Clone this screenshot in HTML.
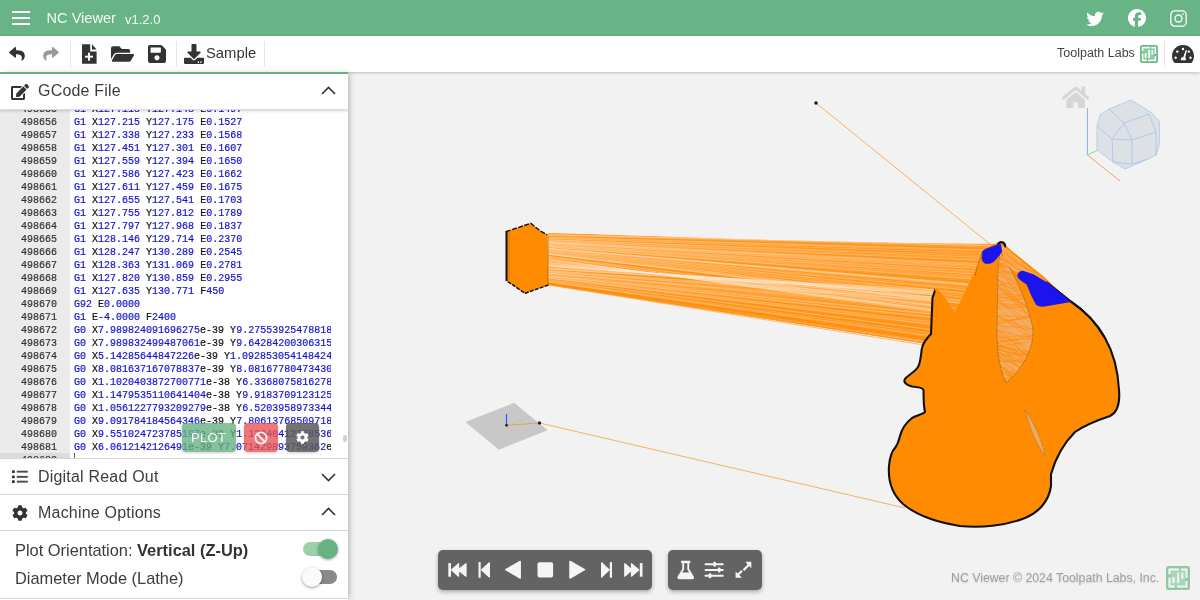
<!DOCTYPE html>
<html><head><meta charset="utf-8">
<style>
*{box-sizing:border-box;margin:0;padding:0}
html,body{width:1200px;height:600px;overflow:hidden;background:#f2f2f2;font-family:"Liberation Sans",sans-serif}
#top,#tool,#left,.txt{will-change:transform}
.abs{position:absolute}
#top{position:absolute;left:0;top:0;width:1200px;height:36px;background:#68b487}
#tool{position:absolute;left:0;top:36px;width:1200px;height:36px;background:#fff;box-shadow:0 1px 3px rgba(0,0,0,.22);z-index:3}
#left{position:absolute;left:0;top:72px;width:348px;height:528px;background:#fff;box-shadow:3px 0 6px -2px rgba(0,0,0,.3);z-index:4;overflow:hidden}
#view{position:absolute;left:0;top:0;width:1200px;height:600px;background:#f2f2f2;overflow:hidden}
.sep{position:absolute;top:41px;width:1px;height:26px;background:#e4e4e4}
.code{position:absolute;left:0;top:36px;width:331px;height:386px;overflow:hidden;font-family:"Liberation Mono",monospace;font-size:10px;line-height:13px;-webkit-text-stroke:0.2px;background:linear-gradient(90deg,#ebebeb 70px,#fff 70px)}
.ln{height:13px;position:relative}
.g{position:absolute;left:0;top:0;width:57px;text-align:right;color:#333}
.c{position:absolute;left:74px;top:0;white-space:pre}
.b{color:#1414d2}
.k{color:#111}
.hdr{position:absolute;left:0;width:348px;font-size:16px;color:#3c3c3c;letter-spacing:.2px}
.line{position:absolute;left:0;width:348px;height:1px;background:#d6d6d6}
</style></head><body>
<div id="view"><svg class="abs" style="left:0;top:0" width="1200" height="600" viewBox="0 0 1200 600">
<line x1="816" y1="103" x2="991" y2="245" stroke="#f5b060" stroke-width="1"/>
<circle cx="816" cy="103" r="1.7" fill="#111"/>
<line x1="506.5" y1="425.3" x2="539.5" y2="423" stroke="#e9a050" stroke-width="1.5"/>
<line x1="539.5" y1="423" x2="905" y2="508" stroke="#f3b06a" stroke-width="1"/>
<polygon points="514,402.8 547.6,430.2 498.9,449.7 465.3,422.1" fill="#c8c8c8"/>
<line x1="506.5" y1="425.3" x2="530.3" y2="416.7" stroke="#8fd08f" stroke-width="0.7" stroke-dasharray="1.5,1"/>
<line x1="506.5" y1="425.3" x2="522.7" y2="439.4" stroke="#e0a890" stroke-width="0.7" stroke-dasharray="1.5,1"/>
<line x1="506.5" y1="425.3" x2="506.5" y2="414" stroke="#1f5fff" stroke-width="1.2"/>
<line x1="506.5" y1="425.3" x2="539.5" y2="423" stroke="#e6a050" stroke-width="1.1"/>
<circle cx="506.5" cy="425.3" r="1.4" fill="#222"/>
<circle cx="539.5" cy="423" r="1.7" fill="#222"/>
<clipPath id="fc"><path d="M548,232.5 C620,235 700,238.3 800,240.8 C880,242.8 940,243.6 1001,244 L1010,250 L1010,400 L540,400 Z"/></clipPath>
<g clip-path="url(#fc)">
<polygon points="548.0,233.0 1000.0,243.5 997.3,244.6 994.6,245.7 991.9,246.9 989.6,248.6 987.2,250.3 984.9,252.0 983.4,254.4 982.4,257.2 981.5,259.9 980.5,262.6 979.3,265.3 978.0,267.9 976.7,270.5 975.4,273.1 974.1,275.8 972.8,278.4 971.6,281.0 970.3,283.6 969.1,286.3 967.8,288.9 966.6,291.5 965.3,294.2 964.1,296.8 962.8,299.4 961.5,302.0 960.2,304.6 958.9,307.2 957.6,309.9 956.3,312.5 955.0,315.1 953.5,313.8 952.0,311.4 950.4,308.9 948.9,306.4 947.3,303.9 945.8,301.5 944.3,299.0 942.6,296.6 940.6,294.5 938.6,292.3 936.6,290.2 935.1,290.2 934.2,292.9 933.3,295.7 932.5,298.5 932.4,301.4 932.2,304.3 932.1,307.2 932.0,310.2 931.9,313.1 931.8,316.0 931.6,318.9 931.5,321.8 931.4,324.7 931.3,327.6 931.1,330.5 931.0,333.4 929.6,335.9 927.9,338.3 926.2,340.6 548.0,283.5" fill="#ff9418"/>
<line x1="548" y1="281.0" x2="931.0" y2="333.9" stroke="#ff9010" stroke-opacity="0.8" stroke-width="0.7"/>
<line x1="548" y1="282.6" x2="927.8" y2="338.4" stroke="#ff9010" stroke-opacity="0.8" stroke-width="0.7"/>
<line x1="548" y1="281.7" x2="929.7" y2="335.8" stroke="#ff9010" stroke-opacity="0.8" stroke-width="0.7"/>
<line x1="548" y1="282.9" x2="927.2" y2="339.2" stroke="#ff9010" stroke-opacity="0.8" stroke-width="0.7"/>
<line x1="548" y1="283.1" x2="927.0" y2="339.5" stroke="#ff9010" stroke-opacity="0.8" stroke-width="0.7"/>
<line x1="548" y1="280.1" x2="931.1" y2="330.8" stroke="#ff9010" stroke-opacity="0.8" stroke-width="0.7"/>
<line x1="548" y1="279.9" x2="931.2" y2="329.8" stroke="#ff9010" stroke-opacity="0.8" stroke-width="0.7"/>
<line x1="548" y1="284.2" x2="924.7" y2="342.6" stroke="#ff9010" stroke-opacity="0.8" stroke-width="0.7"/>
<line x1="548" y1="281.1" x2="930.9" y2="334.2" stroke="#ff9010" stroke-opacity="0.8" stroke-width="0.7"/>
<line x1="548" y1="281.0" x2="931.0" y2="333.8" stroke="#ff9010" stroke-opacity="0.8" stroke-width="0.7"/>
<line x1="548" y1="285.0" x2="923.0" y2="344.9" stroke="#ff9010" stroke-opacity="0.8" stroke-width="0.7"/>
<line x1="548" y1="282.2" x2="928.6" y2="337.3" stroke="#ff9010" stroke-opacity="0.8" stroke-width="0.7"/>
<line x1="548" y1="284.1" x2="924.7" y2="342.6" stroke="#ff9010" stroke-opacity="0.8" stroke-width="0.7"/>
<line x1="548" y1="282.3" x2="928.6" y2="337.4" stroke="#ff9010" stroke-opacity="0.8" stroke-width="0.7"/>
<line x1="548" y1="283.1" x2="926.8" y2="339.7" stroke="#ff9010" stroke-opacity="0.8" stroke-width="0.7"/>
<line x1="548" y1="280.6" x2="931.1" y2="332.3" stroke="#ff9010" stroke-opacity="0.8" stroke-width="0.7"/>
<line x1="548" y1="283.1" x2="926.9" y2="339.7" stroke="#ff9010" stroke-opacity="0.8" stroke-width="0.7"/>
<line x1="548" y1="284.3" x2="924.4" y2="343.1" stroke="#ff9010" stroke-opacity="0.8" stroke-width="0.7"/>
<line x1="548" y1="282.5" x2="928.1" y2="338.0" stroke="#ff9010" stroke-opacity="0.8" stroke-width="0.7"/>
<line x1="548" y1="283.7" x2="925.7" y2="341.2" stroke="#ff9010" stroke-opacity="0.8" stroke-width="0.7"/>
<line x1="548" y1="283.3" x2="926.5" y2="340.2" stroke="#ff9010" stroke-opacity="0.8" stroke-width="0.7"/>
<line x1="548" y1="280.1" x2="931.1" y2="330.7" stroke="#ff9010" stroke-opacity="0.8" stroke-width="0.7"/>
<line x1="548" y1="283.7" x2="925.6" y2="341.5" stroke="#ff9010" stroke-opacity="0.8" stroke-width="0.7"/>
<line x1="548" y1="282.9" x2="927.3" y2="339.0" stroke="#ff9010" stroke-opacity="0.8" stroke-width="0.7"/>
<line x1="548" y1="281.4" x2="930.4" y2="334.8" stroke="#ff9010" stroke-opacity="0.8" stroke-width="0.7"/>
<line x1="548" y1="280.0" x2="931.2" y2="330.1" stroke="#ff9010" stroke-opacity="0.8" stroke-width="0.7"/>
<line x1="548" y1="284.3" x2="924.4" y2="343.0" stroke="#ff9010" stroke-opacity="0.8" stroke-width="0.7"/>
<line x1="548" y1="282.3" x2="928.6" y2="337.3" stroke="#ff9010" stroke-opacity="0.8" stroke-width="0.7"/>
<line x1="548" y1="283.5" x2="926.0" y2="340.9" stroke="#ff9010" stroke-opacity="0.8" stroke-width="0.7"/>
<line x1="548" y1="284.4" x2="924.3" y2="343.2" stroke="#ff9010" stroke-opacity="0.8" stroke-width="0.7"/>
<line x1="548" y1="268.8" x2="934.1" y2="293.2" stroke="#fff4e6" stroke-opacity="0.25" stroke-width="0.6"/>
<line x1="548" y1="273.1" x2="932.2" y2="306.1" stroke="#fff4e6" stroke-opacity="0.43" stroke-width="0.6"/>
<line x1="548" y1="276.9" x2="931.7" y2="318.2" stroke="#fff4e6" stroke-opacity="0.16" stroke-width="0.6"/>
<line x1="548" y1="244.2" x2="975.5" y2="273.0" stroke="#fff4e6" stroke-opacity="0.26" stroke-width="0.6"/>
<line x1="548" y1="264.5" x2="943.9" y2="298.5" stroke="#fff4e6" stroke-opacity="0.29" stroke-width="0.6"/>
<line x1="548" y1="252.6" x2="964.0" y2="297.1" stroke="#fff4e6" stroke-opacity="0.31" stroke-width="0.6"/>
<line x1="548" y1="262.4" x2="946.6" y2="302.8" stroke="#fff4e6" stroke-opacity="0.35" stroke-width="0.6"/>
<line x1="548" y1="279.4" x2="931.2" y2="329.5" stroke="#fff4e6" stroke-opacity="0.45" stroke-width="0.6"/>
<line x1="548" y1="266.7" x2="939.3" y2="293.1" stroke="#fff4e6" stroke-opacity="0.40" stroke-width="0.6"/>
<line x1="548" y1="281.2" x2="929.9" y2="335.4" stroke="#fff4e6" stroke-opacity="0.31" stroke-width="0.6"/>
<line x1="548" y1="268.8" x2="934.9" y2="290.8" stroke="#fff4e6" stroke-opacity="0.39" stroke-width="0.6"/>
<line x1="548" y1="261.9" x2="948.8" y2="306.3" stroke="#fff4e6" stroke-opacity="0.14" stroke-width="0.6"/>
<line x1="548" y1="275.7" x2="931.7" y2="317.2" stroke="#fff4e6" stroke-opacity="0.15" stroke-width="0.6"/>
<line x1="548" y1="273.1" x2="932.2" y2="305.9" stroke="#fff4e6" stroke-opacity="0.17" stroke-width="0.6"/>
<line x1="548" y1="248.0" x2="970.1" y2="284.2" stroke="#fff4e6" stroke-opacity="0.41" stroke-width="0.6"/>
<line x1="548" y1="235.7" x2="991.1" y2="247.5" stroke="#fff4e6" stroke-opacity="0.13" stroke-width="0.6"/>
<line x1="548" y1="269.0" x2="934.5" y2="291.9" stroke="#fff4e6" stroke-opacity="0.41" stroke-width="0.6"/>
<line x1="548" y1="282.0" x2="929.2" y2="336.5" stroke="#fff4e6" stroke-opacity="0.45" stroke-width="0.6"/>
<line x1="548" y1="248.8" x2="970.0" y2="284.4" stroke="#fff4e6" stroke-opacity="0.32" stroke-width="0.6"/>
<line x1="548" y1="235.1" x2="994.4" y2="245.8" stroke="#fff4e6" stroke-opacity="0.25" stroke-width="0.6"/>
<line x1="548" y1="263.7" x2="945.7" y2="301.3" stroke="#fff4e6" stroke-opacity="0.13" stroke-width="0.6"/>
<line x1="548" y1="276.4" x2="931.7" y2="317.1" stroke="#fff4e6" stroke-opacity="0.44" stroke-width="0.6"/>
<line x1="548" y1="277.8" x2="931.5" y2="322.3" stroke="#fff4e6" stroke-opacity="0.27" stroke-width="0.6"/>
<line x1="548" y1="259.2" x2="953.0" y2="312.9" stroke="#fff4e6" stroke-opacity="0.32" stroke-width="0.6"/>
<line x1="548" y1="261.1" x2="949.5" y2="307.3" stroke="#fff4e6" stroke-opacity="0.43" stroke-width="0.6"/>
<line x1="548" y1="258.6" x2="954.6" y2="315.5" stroke="#fff4e6" stroke-opacity="0.36" stroke-width="0.6"/>
<line x1="548" y1="245.3" x2="975.0" y2="274.0" stroke="#fff4e6" stroke-opacity="0.44" stroke-width="0.6"/>
<line x1="548" y1="259.3" x2="953.1" y2="313.1" stroke="#fff4e6" stroke-opacity="0.12" stroke-width="0.6"/>
<line x1="548" y1="254.0" x2="961.4" y2="302.3" stroke="#fff4e6" stroke-opacity="0.13" stroke-width="0.6"/>
<line x1="548" y1="263.9" x2="944.3" y2="299.1" stroke="#fff4e6" stroke-opacity="0.14" stroke-width="0.6"/>
<line x1="548" y1="264.5" x2="943.6" y2="297.9" stroke="#fff4e6" stroke-opacity="0.34" stroke-width="0.6"/>
<line x1="548" y1="250.9" x2="965.9" y2="293.1" stroke="#fff4e6" stroke-opacity="0.36" stroke-width="0.6"/>
<line x1="548" y1="234.6" x2="996.3" y2="245.0" stroke="#fff4e6" stroke-opacity="0.34" stroke-width="0.6"/>
<line x1="548" y1="281.1" x2="931.0" y2="333.2" stroke="#fff4e6" stroke-opacity="0.27" stroke-width="0.6"/>
<line x1="548" y1="262.8" x2="947.0" y2="303.4" stroke="#fff4e6" stroke-opacity="0.24" stroke-width="0.6"/>
<line x1="548" y1="249.0" x2="969.3" y2="285.8" stroke="#fff4e6" stroke-opacity="0.32" stroke-width="0.6"/>
<line x1="548" y1="248.4" x2="970.2" y2="283.9" stroke="#fff4e6" stroke-opacity="0.37" stroke-width="0.6"/>
<line x1="548" y1="234.8" x2="993.8" y2="246.0" stroke="#fff4e6" stroke-opacity="0.36" stroke-width="0.6"/>
<line x1="548" y1="248.8" x2="969.7" y2="284.9" stroke="#fff4e6" stroke-opacity="0.39" stroke-width="0.6"/>
<line x1="548" y1="245.3" x2="975.1" y2="273.8" stroke="#fff4e6" stroke-opacity="0.26" stroke-width="0.6"/>
<line x1="548" y1="268.0" x2="936.3" y2="289.9" stroke="#fff4e6" stroke-opacity="0.23" stroke-width="0.6"/>
<line x1="548" y1="250.0" x2="967.0" y2="290.6" stroke="#fff4e6" stroke-opacity="0.26" stroke-width="0.6"/>
<line x1="548" y1="275.8" x2="931.8" y2="314.5" stroke="#fff4e6" stroke-opacity="0.23" stroke-width="0.6"/>
<line x1="548" y1="265.6" x2="940.0" y2="293.8" stroke="#fff4e6" stroke-opacity="0.27" stroke-width="0.6"/>
<line x1="548" y1="244.6" x2="976.2" y2="271.5" stroke="#fff4e6" stroke-opacity="0.29" stroke-width="0.6"/>
<line x1="548" y1="242.9" x2="977.8" y2="268.5" stroke="#fff4e6" stroke-opacity="0.40" stroke-width="0.6"/>
<line x1="548" y1="242.6" x2="979.2" y2="265.7" stroke="#fff4e6" stroke-opacity="0.39" stroke-width="0.6"/>
<line x1="548" y1="265.2" x2="941.2" y2="295.1" stroke="#fff4e6" stroke-opacity="0.23" stroke-width="0.6"/>
<line x1="548" y1="239.9" x2="982.4" y2="257.1" stroke="#fff4e6" stroke-opacity="0.38" stroke-width="0.6"/>
<line x1="548" y1="246.9" x2="972.4" y2="279.3" stroke="#fff4e6" stroke-opacity="0.26" stroke-width="0.6"/>
<line x1="548" y1="254.3" x2="961.3" y2="302.5" stroke="#fff4e6" stroke-opacity="0.42" stroke-width="0.6"/>
<line x1="548" y1="241.2" x2="981.3" y2="260.4" stroke="#fff4e6" stroke-opacity="0.43" stroke-width="0.6"/>
<line x1="548" y1="277.0" x2="931.5" y2="321.6" stroke="#fff4e6" stroke-opacity="0.26" stroke-width="0.6"/>
<line x1="548" y1="280.5" x2="931.0" y2="333.4" stroke="#fff4e6" stroke-opacity="0.19" stroke-width="0.6"/>
<line x1="548" y1="270.3" x2="932.5" y2="298.1" stroke="#fff4e6" stroke-opacity="0.34" stroke-width="0.6"/>
<line x1="548" y1="259.2" x2="953.7" y2="314.2" stroke="#fff4e6" stroke-opacity="0.23" stroke-width="0.6"/>
<line x1="548" y1="244.8" x2="976.1" y2="271.7" stroke="#fff4e6" stroke-opacity="0.31" stroke-width="0.6"/>
<line x1="548" y1="247.7" x2="970.5" y2="283.3" stroke="#fff4e6" stroke-opacity="0.13" stroke-width="0.6"/>
<line x1="548" y1="278.2" x2="931.4" y2="324.6" stroke="#fff4e6" stroke-opacity="0.42" stroke-width="0.6"/>
<line x1="548" y1="277.8" x2="931.4" y2="324.1" stroke="#fff4e6" stroke-opacity="0.31" stroke-width="0.6"/>
<line x1="548" y1="234.2" x2="995.4" y2="245.4" stroke="#fff4e6" stroke-opacity="0.18" stroke-width="0.6"/>
<line x1="548" y1="248.3" x2="969.8" y2="284.8" stroke="#fff4e6" stroke-opacity="0.29" stroke-width="0.6"/>
<line x1="548" y1="254.0" x2="960.9" y2="303.3" stroke="#fff4e6" stroke-opacity="0.32" stroke-width="0.6"/>
<line x1="548" y1="250.4" x2="967.4" y2="289.9" stroke="#fff4e6" stroke-opacity="0.40" stroke-width="0.6"/>
<line x1="548" y1="257.1" x2="956.3" y2="312.5" stroke="#fff4e6" stroke-opacity="0.24" stroke-width="0.6"/>
<line x1="548" y1="243.3" x2="977.7" y2="268.6" stroke="#fff4e6" stroke-opacity="0.39" stroke-width="0.6"/>
<line x1="548" y1="242.0" x2="979.3" y2="265.4" stroke="#fff4e6" stroke-opacity="0.42" stroke-width="0.6"/>
<line x1="548" y1="273.3" x2="932.1" y2="308.4" stroke="#fff4e6" stroke-opacity="0.12" stroke-width="0.6"/>
<line x1="548" y1="264.6" x2="942.6" y2="296.6" stroke="#fff4e6" stroke-opacity="0.14" stroke-width="0.6"/>
<line x1="548" y1="246.9" x2="972.5" y2="279.1" stroke="#fff4e6" stroke-opacity="0.29" stroke-width="0.6"/>
<line x1="548" y1="254.4" x2="960.9" y2="303.2" stroke="#fff4e6" stroke-opacity="0.38" stroke-width="0.6"/>
<line x1="548" y1="233.6" x2="999.5" y2="243.7" stroke="#fff4e6" stroke-opacity="0.16" stroke-width="0.6"/>
<line x1="548" y1="239.7" x2="983.0" y2="255.5" stroke="#fff4e6" stroke-opacity="0.44" stroke-width="0.6"/>
<line x1="548" y1="275.7" x2="931.8" y2="314.0" stroke="#fff4e6" stroke-opacity="0.29" stroke-width="0.6"/>
<line x1="548" y1="249.1" x2="969.1" y2="286.1" stroke="#fff4e6" stroke-opacity="0.24" stroke-width="0.6"/>
<line x1="548" y1="265.5" x2="941.1" y2="295.0" stroke="#fff4e6" stroke-opacity="0.24" stroke-width="0.6"/>
<line x1="548" y1="243.0" x2="978.5" y2="267.0" stroke="#fff4e6" stroke-opacity="0.16" stroke-width="0.6"/>
<line x1="548" y1="261.0" x2="949.6" y2="307.6" stroke="#fff4e6" stroke-opacity="0.25" stroke-width="0.6"/>
<line x1="548" y1="237.5" x2="987.4" y2="250.2" stroke="#fff4e6" stroke-opacity="0.24" stroke-width="0.6"/>
<line x1="548" y1="263.4" x2="945.0" y2="300.3" stroke="#fff4e6" stroke-opacity="0.25" stroke-width="0.6"/>
<line x1="548" y1="273.1" x2="932.1" y2="306.8" stroke="#fff4e6" stroke-opacity="0.26" stroke-width="0.6"/>
<line x1="548" y1="251.9" x2="964.7" y2="295.5" stroke="#fff4e6" stroke-opacity="0.35" stroke-width="0.6"/>
<line x1="548" y1="254.3" x2="960.8" y2="303.5" stroke="#fff4e6" stroke-opacity="0.27" stroke-width="0.6"/>
<line x1="548" y1="245.6" x2="974.0" y2="275.9" stroke="#fff4e6" stroke-opacity="0.35" stroke-width="0.6"/>
<line x1="548" y1="237.1" x2="987.9" y2="249.8" stroke="#fff4e6" stroke-opacity="0.26" stroke-width="0.6"/>
<line x1="548" y1="277.0" x2="931.5" y2="321.4" stroke="#fff4e6" stroke-opacity="0.24" stroke-width="0.6"/>
<line x1="548" y1="277.9" x2="931.4" y2="324.0" stroke="#fff4e6" stroke-opacity="0.21" stroke-width="0.6"/>
<line x1="548" y1="256.4" x2="958.4" y2="308.4" stroke="#fff4e6" stroke-opacity="0.39" stroke-width="0.6"/>
<line x1="548" y1="266.2" x2="938.6" y2="292.3" stroke="#fff4e6" stroke-opacity="0.38" stroke-width="0.6"/>
<line x1="548" y1="266.5" x2="938.4" y2="292.1" stroke="#fff4e6" stroke-opacity="0.31" stroke-width="0.6"/>
<line x1="548" y1="238.6" x2="983.6" y2="253.8" stroke="#fff4e6" stroke-opacity="0.12" stroke-width="0.6"/>
<line x1="548" y1="240.6" x2="981.1" y2="261.0" stroke="#fff4e6" stroke-opacity="0.13" stroke-width="0.6"/>
<line x1="548" y1="238.1" x2="986.0" y2="251.2" stroke="#fff4e6" stroke-opacity="0.41" stroke-width="0.6"/>
<line x1="548" y1="242.4" x2="979.9" y2="264.2" stroke="#fff4e6" stroke-opacity="0.40" stroke-width="0.6"/>
<line x1="548" y1="239.5" x2="982.3" y2="257.6" stroke="#fff4e6" stroke-opacity="0.34" stroke-width="0.6"/>
<line x1="548" y1="274.8" x2="931.8" y2="314.0" stroke="#fff4e6" stroke-opacity="0.31" stroke-width="0.6"/>
<line x1="548" y1="273.0" x2="932.2" y2="304.3" stroke="#fff4e6" stroke-opacity="0.37" stroke-width="0.6"/>
<line x1="548" y1="258.8" x2="953.6" y2="314.0" stroke="#fff4e6" stroke-opacity="0.16" stroke-width="0.6"/>
<line x1="548" y1="270.5" x2="932.5" y2="299.0" stroke="#fff4e6" stroke-opacity="0.14" stroke-width="0.6"/>
<line x1="548" y1="249.5" x2="968.1" y2="288.2" stroke="#fff4e6" stroke-opacity="0.39" stroke-width="0.6"/>
<line x1="548" y1="245.5" x2="974.8" y2="274.3" stroke="#fff4e6" stroke-opacity="0.20" stroke-width="0.6"/>
<line x1="548" y1="263.9" x2="944.1" y2="298.7" stroke="#fff4e6" stroke-opacity="0.25" stroke-width="0.6"/>
<line x1="548" y1="251.7" x2="965.2" y2="294.4" stroke="#fff4e6" stroke-opacity="0.24" stroke-width="0.6"/>
<line x1="548" y1="254.2" x2="961.9" y2="301.2" stroke="#fff4e6" stroke-opacity="0.29" stroke-width="0.6"/>
<line x1="548" y1="281.6" x2="930.1" y2="335.2" stroke="#fff4e6" stroke-opacity="0.37" stroke-width="0.6"/>
<line x1="548" y1="241.5" x2="980.2" y2="263.5" stroke="#fff4e6" stroke-opacity="0.37" stroke-width="0.6"/>
<line x1="548" y1="266.8" x2="938.2" y2="291.8" stroke="#fff4e6" stroke-opacity="0.28" stroke-width="0.6"/>
<line x1="548" y1="265.3" x2="940.8" y2="294.7" stroke="#fff4e6" stroke-opacity="0.17" stroke-width="0.6"/>
<line x1="548" y1="238.3" x2="983.8" y2="253.2" stroke="#fff4e6" stroke-opacity="0.42" stroke-width="0.6"/>
<line x1="548" y1="259.1" x2="953.6" y2="314.0" stroke="#fff4e6" stroke-opacity="0.36" stroke-width="0.6"/>
<line x1="548" y1="242.7" x2="979.0" y2="266.0" stroke="#fff4e6" stroke-opacity="0.19" stroke-width="0.6"/>
<line x1="548" y1="262.4" x2="947.6" y2="304.4" stroke="#fff4e6" stroke-opacity="0.20" stroke-width="0.6"/>
<line x1="548" y1="267.7" x2="935.3" y2="289.6" stroke="#fff4e6" stroke-opacity="0.22" stroke-width="0.6"/>
<line x1="548" y1="268.4" x2="935.1" y2="290.1" stroke="#fff4e6" stroke-opacity="0.40" stroke-width="0.6"/>
<line x1="548" y1="262.4" x2="947.8" y2="304.7" stroke="#fff4e6" stroke-opacity="0.19" stroke-width="0.6"/>
<line x1="548" y1="234.7" x2="994.7" y2="245.7" stroke="#fff4e6" stroke-opacity="0.25" stroke-width="0.6"/>
<line x1="548" y1="242.0" x2="979.9" y2="264.2" stroke="#fff4e6" stroke-opacity="0.23" stroke-width="0.6"/>
<line x1="548" y1="271.8" x2="932.4" y2="300.5" stroke="#fff4e6" stroke-opacity="0.45" stroke-width="0.6"/>
<line x1="548" y1="257.2" x2="956.4" y2="312.3" stroke="#fff4e6" stroke-opacity="0.27" stroke-width="0.6"/>
<line x1="548" y1="274.7" x2="931.9" y2="313.2" stroke="#fff4e6" stroke-opacity="0.30" stroke-width="0.6"/>
<line x1="548" y1="257.3" x2="956.1" y2="312.9" stroke="#fff4e6" stroke-opacity="0.40" stroke-width="0.6"/>
<line x1="548" y1="253.3" x2="962.2" y2="300.5" stroke="#fff4e6" stroke-opacity="0.44" stroke-width="0.6"/>
<line x1="548" y1="256.6" x2="957.9" y2="309.2" stroke="#fff4e6" stroke-opacity="0.20" stroke-width="0.6"/>
<line x1="548" y1="269.0" x2="934.2" y2="293.0" stroke="#fff4e6" stroke-opacity="0.44" stroke-width="0.6"/>
<line x1="548" y1="275.7" x2="931.8" y2="314.5" stroke="#fff4e6" stroke-opacity="0.18" stroke-width="0.6"/>
<line x1="548" y1="246.3" x2="973.6" y2="276.9" stroke="#fff4e6" stroke-opacity="0.35" stroke-width="0.6"/>
<line x1="548" y1="275.9" x2="931.7" y2="317.6" stroke="#fff4e6" stroke-opacity="0.20" stroke-width="0.6"/>
<line x1="548" y1="276.3" x2="931.7" y2="316.6" stroke="#fff4e6" stroke-opacity="0.26" stroke-width="0.6"/>
<line x1="548" y1="269.5" x2="934.2" y2="292.8" stroke="#fff4e6" stroke-opacity="0.15" stroke-width="0.6"/>
<line x1="548" y1="274.7" x2="931.9" y2="311.2" stroke="#fff4e6" stroke-opacity="0.24" stroke-width="0.6"/>
<line x1="548" y1="262.2" x2="947.4" y2="304.1" stroke="#fff4e6" stroke-opacity="0.12" stroke-width="0.6"/>
<line x1="548" y1="250.1" x2="967.6" y2="289.5" stroke="#fff4e6" stroke-opacity="0.28" stroke-width="0.6"/>
<line x1="548" y1="243.9" x2="976.6" y2="270.7" stroke="#fff4e6" stroke-opacity="0.44" stroke-width="0.6"/>
<line x1="548" y1="252.8" x2="963.3" y2="298.5" stroke="#fff4e6" stroke-opacity="0.16" stroke-width="0.6"/>
<line x1="548" y1="247.1" x2="971.6" y2="280.9" stroke="#fff4e6" stroke-opacity="0.16" stroke-width="0.6"/>
<line x1="548" y1="277.3" x2="931.5" y2="322.6" stroke="#fff4e6" stroke-opacity="0.15" stroke-width="0.6"/>
<line x1="548" y1="280.0" x2="931.2" y2="329.9" stroke="#fff4e6" stroke-opacity="0.37" stroke-width="0.6"/>
<line x1="548" y1="270.9" x2="932.5" y2="298.1" stroke="#fff4e6" stroke-opacity="0.34" stroke-width="0.6"/>
<line x1="548" y1="265.8" x2="939.8" y2="293.5" stroke="#fff4e6" stroke-opacity="0.21" stroke-width="0.6"/>
<line x1="548" y1="270.8" x2="932.4" y2="300.0" stroke="#fff4e6" stroke-opacity="0.34" stroke-width="0.6"/>
<line x1="548" y1="260.0" x2="952.5" y2="312.2" stroke="#fff4e6" stroke-opacity="0.28" stroke-width="0.6"/>
<line x1="548" y1="250.9" x2="965.9" y2="293.1" stroke="#fff4e6" stroke-opacity="0.34" stroke-width="0.6"/>
<line x1="548" y1="261.5" x2="949.7" y2="307.6" stroke="#fff4e6" stroke-opacity="0.33" stroke-width="0.6"/>
<line x1="548" y1="264.7" x2="943.8" y2="298.3" stroke="#fff4e6" stroke-opacity="0.41" stroke-width="0.6"/>
<line x1="548" y1="265.9" x2="941.3" y2="295.2" stroke="#fff4e6" stroke-opacity="0.43" stroke-width="0.6"/>
<line x1="548" y1="240.5" x2="981.7" y2="259.1" stroke="#fff4e6" stroke-opacity="0.36" stroke-width="0.6"/>
<line x1="548" y1="263.0" x2="946.1" y2="302.0" stroke="#fff4e6" stroke-opacity="0.33" stroke-width="0.6"/>
<line x1="548" y1="256.1" x2="958.5" y2="308.0" stroke="#fff4e6" stroke-opacity="0.18" stroke-width="0.6"/>
<line x1="548" y1="236.9" x2="987.4" y2="250.2" stroke="#fff4e6" stroke-opacity="0.37" stroke-width="0.6"/>
<line x1="548" y1="260.4" x2="950.7" y2="309.3" stroke="#fff4e6" stroke-opacity="0.24" stroke-width="0.6"/>
<line x1="548" y1="246.7" x2="972.7" y2="278.6" stroke="#fff4e6" stroke-opacity="0.41" stroke-width="0.6"/>
<line x1="548" y1="235.6" x2="991.7" y2="247.0" stroke="#fff4e6" stroke-opacity="0.20" stroke-width="0.6"/>
<line x1="548" y1="271.5" x2="932.4" y2="300.3" stroke="#fff4e6" stroke-opacity="0.23" stroke-width="0.6"/>
<line x1="548" y1="253.4" x2="962.3" y2="300.4" stroke="#fff4e6" stroke-opacity="0.37" stroke-width="0.6"/>
<line x1="548" y1="251.0" x2="965.6" y2="293.6" stroke="#fff4e6" stroke-opacity="0.16" stroke-width="0.6"/>
<line x1="548" y1="246.9" x2="972.8" y2="278.4" stroke="#fff4e6" stroke-opacity="0.16" stroke-width="0.6"/>
<line x1="548" y1="272.0" x2="932.3" y2="303.4" stroke="#fff4e6" stroke-opacity="0.18" stroke-width="0.6"/>
<line x1="548" y1="242.9" x2="978.5" y2="267.0" stroke="#fff4e6" stroke-opacity="0.37" stroke-width="0.6"/>
<line x1="548" y1="273.8" x2="932.0" y2="309.8" stroke="#fff4e6" stroke-opacity="0.32" stroke-width="0.6"/>
<line x1="548" y1="240.8" x2="981.4" y2="260.2" stroke="#fff4e6" stroke-opacity="0.18" stroke-width="0.6"/>
<line x1="548" y1="259.6" x2="952.4" y2="312.1" stroke="#fff4e6" stroke-opacity="0.19" stroke-width="0.6"/>
<line x1="548" y1="245.9" x2="973.3" y2="277.5" stroke="#fff4e6" stroke-opacity="0.13" stroke-width="0.6"/>
<line x1="548" y1="273.2" x2="932.1" y2="308.1" stroke="#fff4e6" stroke-opacity="0.43" stroke-width="0.6"/>
<line x1="548" y1="252.4" x2="963.8" y2="297.3" stroke="#fff4e6" stroke-opacity="0.31" stroke-width="0.6"/>
<line x1="548" y1="264.8" x2="941.7" y2="295.7" stroke="#fff4e6" stroke-opacity="0.35" stroke-width="0.6"/>
<line x1="548" y1="248.3" x2="969.5" y2="285.4" stroke="#fff4e6" stroke-opacity="0.28" stroke-width="0.6"/>
<line x1="548" y1="263.2" x2="945.4" y2="300.9" stroke="#fff4e6" stroke-opacity="0.12" stroke-width="0.6"/>
<line x1="548" y1="271.6" x2="932.3" y2="301.7" stroke="#fff4e6" stroke-opacity="0.28" stroke-width="0.6"/>
<line x1="548" y1="259.4" x2="953.0" y2="313.0" stroke="#fff4e6" stroke-opacity="0.18" stroke-width="0.6"/>
<line x1="548" y1="259.7" x2="953.3" y2="313.4" stroke="#fff4e6" stroke-opacity="0.29" stroke-width="0.6"/>
</g>
<path d="M1000,243.3 C1004,244 1008,247 1012,251 L1043,276 L1071,301.7 C1085,311 1097,324 1105,338 C1113,352 1118,370 1119,390 C1120,402 1118,412 1110,416 C1098,420 1085,425 1075,432 C1062,445 1055,460 1051,474 L1051,486 C1049,500 1040,512 1025,518 C1005,526 980,528 960,526 C935,522 915,514 903,504 C892,494 888,480 889,466 C890,455 893,450 895,448 C898,444 899,440 900,436 C902,428 907,422 912,418 C918,415 923,414 925,412 C923.5,406 923.5,398 923.5,390 C923,388 918,387 912,386.5 C906,385 903,382 905,379 C908,375 915,372 918,367 C921,362 921,352 922,348 C923,343 927,338 931,334 L932.5,298 L935.5,289 L943,297 L954.7,315.7 L964,297 L973,278 L980,264 L984,252.7 L992,246.8 Z" fill="#ff8c00"/>
<path d="M1046,282 L1071,301.7 C1085,311 1097,324 1105,338 C1113,352 1118,370 1119,390 C1120,402 1118,412 1110,416 C1098,420 1085,425 1075,432 C1062,445 1055,460 1051,474 L1051,486 C1049,500 1040,512 1025,518 C1005,526 980,528 960,526 C935,522 915,514 903,504 C892,494 888,480 889,466 C890,455 893,450 895,448 C898,444 899,440 900,436 C902,428 907,422 912,418 C918,415 923,414 925,412 C923.5,406 923.5,398 923.5,390 C923,388 918,387 912,386.5 C906,385 903,382 905,379 C908,375 915,372 918,367 C921,362 921,352 922,348 C923,343 927,338 931,334 L932.5,298 L935.5,289 " fill="none" stroke="#111" stroke-width="2.1" stroke-linejoin="round"/>
<path d="M935.5,289 L943,297 L954.7,315.7 L964,297 L973,278 L980,264 L984,252.7 L992,246.8 L1000,243.3" fill="none" stroke="#ff8c00" stroke-width="2.8"/>
<clipPath id="lc"><path d="M1000,252 C1012,270 1028,300 1033,330 C1034,350 1020,372 1006,383 C1000,370 997,355 997,330 L998,268 Z"/></clipPath>
<path d="M1000,252 C1012,270 1028,300 1033,330 C1034,350 1020,372 1006,383 C1000,370 997,355 997,330 L998,268 Z" fill="#f5ac64"/>
<g clip-path="url(#lc)">
<line x1="995" y1="333.4" x2="1036" y2="350.0" stroke="#ff8c00" stroke-width="0.7" stroke-opacity="0.75"/>
<line x1="995" y1="320.6" x2="1036" y2="368.1" stroke="#ff8c00" stroke-width="0.7" stroke-opacity="0.75"/>
<line x1="995" y1="372.7" x2="1036" y2="370.9" stroke="#ff8c00" stroke-width="0.7" stroke-opacity="0.75"/>
<line x1="995" y1="356.8" x2="1036" y2="384.2" stroke="#ff8c00" stroke-width="0.7" stroke-opacity="0.75"/>
<line x1="995" y1="238.1" x2="1036" y2="249.7" stroke="#ff8c00" stroke-width="0.7" stroke-opacity="0.75"/>
<line x1="995" y1="267.3" x2="1036" y2="262.0" stroke="#ff8c00" stroke-width="0.7" stroke-opacity="0.75"/>
<line x1="995" y1="316.2" x2="1036" y2="362.0" stroke="#ff8c00" stroke-width="0.7" stroke-opacity="0.75"/>
<line x1="995" y1="281.7" x2="1036" y2="323.9" stroke="#ff8c00" stroke-width="0.7" stroke-opacity="0.75"/>
<line x1="995" y1="341.1" x2="1036" y2="339.2" stroke="#ff8c00" stroke-width="0.7" stroke-opacity="0.75"/>
<line x1="995" y1="367.3" x2="1036" y2="393.4" stroke="#ff8c00" stroke-width="0.7" stroke-opacity="0.75"/>
<line x1="995" y1="378.3" x2="1036" y2="411.3" stroke="#ff8c00" stroke-width="0.7" stroke-opacity="0.75"/>
<line x1="995" y1="348.4" x2="1036" y2="359.0" stroke="#ff8c00" stroke-width="0.7" stroke-opacity="0.75"/>
<line x1="995" y1="359.1" x2="1036" y2="405.0" stroke="#ff8c00" stroke-width="0.7" stroke-opacity="0.75"/>
<line x1="995" y1="367.8" x2="1036" y2="384.1" stroke="#ff8c00" stroke-width="0.7" stroke-opacity="0.75"/>
<line x1="995" y1="351.1" x2="1036" y2="370.2" stroke="#ff8c00" stroke-width="0.7" stroke-opacity="0.75"/>
<line x1="995" y1="247.5" x2="1036" y2="240.0" stroke="#ff8c00" stroke-width="0.7" stroke-opacity="0.75"/>
<line x1="995" y1="242.5" x2="1036" y2="244.5" stroke="#ff8c00" stroke-width="0.7" stroke-opacity="0.75"/>
<line x1="995" y1="255.7" x2="1036" y2="275.6" stroke="#ff8c00" stroke-width="0.7" stroke-opacity="0.75"/>
<line x1="995" y1="341.9" x2="1036" y2="364.1" stroke="#ff8c00" stroke-width="0.7" stroke-opacity="0.75"/>
<line x1="995" y1="297.5" x2="1036" y2="326.5" stroke="#ff8c00" stroke-width="0.7" stroke-opacity="0.75"/>
<line x1="995" y1="278.7" x2="1036" y2="296.6" stroke="#ff8c00" stroke-width="0.7" stroke-opacity="0.75"/>
<line x1="995" y1="351.1" x2="1036" y2="365.2" stroke="#ff8c00" stroke-width="0.7" stroke-opacity="0.75"/>
<line x1="995" y1="258.9" x2="1036" y2="302.9" stroke="#ff8c00" stroke-width="0.7" stroke-opacity="0.75"/>
<line x1="995" y1="345.2" x2="1036" y2="357.2" stroke="#ff8c00" stroke-width="0.7" stroke-opacity="0.75"/>
<line x1="995" y1="289.4" x2="1036" y2="311.1" stroke="#ff8c00" stroke-width="0.7" stroke-opacity="0.75"/>
<line x1="995" y1="325.4" x2="1036" y2="328.9" stroke="#ff8c00" stroke-width="0.7" stroke-opacity="0.75"/>
<line x1="995" y1="230.4" x2="1036" y2="233.0" stroke="#ff8c00" stroke-width="0.7" stroke-opacity="0.75"/>
<line x1="995" y1="355.3" x2="1036" y2="353.9" stroke="#ff8c00" stroke-width="0.7" stroke-opacity="0.75"/>
<line x1="995" y1="303.6" x2="1036" y2="305.3" stroke="#ff8c00" stroke-width="0.7" stroke-opacity="0.75"/>
<line x1="995" y1="263.5" x2="1036" y2="263.7" stroke="#ff8c00" stroke-width="0.7" stroke-opacity="0.75"/>
<line x1="995" y1="294.6" x2="1036" y2="294.7" stroke="#ff8c00" stroke-width="0.7" stroke-opacity="0.75"/>
<line x1="995" y1="234.4" x2="1036" y2="231.0" stroke="#ff8c00" stroke-width="0.7" stroke-opacity="0.75"/>
<line x1="995" y1="256.9" x2="1036" y2="276.3" stroke="#ff8c00" stroke-width="0.7" stroke-opacity="0.75"/>
<line x1="995" y1="239.6" x2="1036" y2="230.9" stroke="#ff8c00" stroke-width="0.7" stroke-opacity="0.75"/>
<line x1="995" y1="301.7" x2="1036" y2="316.1" stroke="#ff8c00" stroke-width="0.7" stroke-opacity="0.75"/>
<line x1="995" y1="342.6" x2="1036" y2="335.6" stroke="#ff8c00" stroke-width="0.7" stroke-opacity="0.75"/>
<line x1="995" y1="294.5" x2="1036" y2="308.3" stroke="#ff8c00" stroke-width="0.7" stroke-opacity="0.75"/>
<line x1="995" y1="234.3" x2="1036" y2="282.2" stroke="#ff8c00" stroke-width="0.7" stroke-opacity="0.75"/>
<line x1="995" y1="265.0" x2="1036" y2="260.7" stroke="#ff8c00" stroke-width="0.7" stroke-opacity="0.75"/>
<line x1="995" y1="305.9" x2="1036" y2="305.8" stroke="#ff8c00" stroke-width="0.7" stroke-opacity="0.75"/>
<line x1="995" y1="329.6" x2="1036" y2="340.4" stroke="#ff8c00" stroke-width="0.7" stroke-opacity="0.75"/>
<line x1="995" y1="249.8" x2="1036" y2="242.9" stroke="#ff8c00" stroke-width="0.7" stroke-opacity="0.75"/>
<line x1="995" y1="346.4" x2="1036" y2="352.9" stroke="#ff8c00" stroke-width="0.7" stroke-opacity="0.75"/>
<line x1="995" y1="356.1" x2="1036" y2="374.0" stroke="#ff8c00" stroke-width="0.7" stroke-opacity="0.75"/>
<line x1="995" y1="379.3" x2="1036" y2="387.3" stroke="#ff8c00" stroke-width="0.7" stroke-opacity="0.75"/>
<line x1="995" y1="270.0" x2="1036" y2="275.9" stroke="#ff8c00" stroke-width="0.7" stroke-opacity="0.75"/>
<line x1="995" y1="360.3" x2="1036" y2="388.1" stroke="#ff8c00" stroke-width="0.7" stroke-opacity="0.75"/>
<line x1="995" y1="285.2" x2="1036" y2="280.8" stroke="#ff8c00" stroke-width="0.7" stroke-opacity="0.75"/>
<line x1="995" y1="339.2" x2="1036" y2="387.3" stroke="#ff8c00" stroke-width="0.7" stroke-opacity="0.75"/>
<line x1="995" y1="324.8" x2="1036" y2="315.0" stroke="#ff8c00" stroke-width="0.7" stroke-opacity="0.75"/>
<line x1="995" y1="234.8" x2="1036" y2="230.3" stroke="#ff8c00" stroke-width="0.7" stroke-opacity="0.75"/>
<line x1="995" y1="257.3" x2="1036" y2="249.4" stroke="#ff8c00" stroke-width="0.7" stroke-opacity="0.75"/>
<line x1="995" y1="238.6" x2="1036" y2="267.9" stroke="#ff8c00" stroke-width="0.7" stroke-opacity="0.75"/>
<line x1="995" y1="374.0" x2="1036" y2="376.1" stroke="#ff8c00" stroke-width="0.7" stroke-opacity="0.75"/>
<line x1="995" y1="385.8" x2="1036" y2="404.4" stroke="#ff8c00" stroke-width="0.7" stroke-opacity="0.75"/>
<line x1="995" y1="358.6" x2="1036" y2="403.6" stroke="#ff8c00" stroke-width="0.7" stroke-opacity="0.75"/>
<line x1="995" y1="380.4" x2="1036" y2="372.5" stroke="#ff8c00" stroke-width="0.7" stroke-opacity="0.75"/>
<line x1="995" y1="278.8" x2="1036" y2="305.2" stroke="#ff8c00" stroke-width="0.7" stroke-opacity="0.75"/>
<line x1="995" y1="381.4" x2="1036" y2="376.7" stroke="#ff8c00" stroke-width="0.7" stroke-opacity="0.75"/>
<line x1="995" y1="276.9" x2="1036" y2="317.9" stroke="#ff8c00" stroke-width="0.7" stroke-opacity="0.75"/>
<line x1="995" y1="248.3" x2="1036" y2="261.7" stroke="#ff8c00" stroke-width="0.7" stroke-opacity="0.75"/>
<line x1="995" y1="283.5" x2="1036" y2="314.3" stroke="#ff8c00" stroke-width="0.7" stroke-opacity="0.75"/>
<line x1="995" y1="378.6" x2="1036" y2="379.0" stroke="#ff8c00" stroke-width="0.7" stroke-opacity="0.75"/>
<line x1="995" y1="348.4" x2="1036" y2="382.4" stroke="#ff8c00" stroke-width="0.7" stroke-opacity="0.75"/>
<line x1="995" y1="363.7" x2="1036" y2="386.9" stroke="#ff8c00" stroke-width="0.7" stroke-opacity="0.75"/>
<line x1="995" y1="377.8" x2="1036" y2="389.5" stroke="#ff8c00" stroke-width="0.7" stroke-opacity="0.75"/>
<line x1="995" y1="296.4" x2="1036" y2="300.1" stroke="#ff8c00" stroke-width="0.7" stroke-opacity="0.75"/>
<line x1="995" y1="354.7" x2="1036" y2="373.6" stroke="#ff8c00" stroke-width="0.7" stroke-opacity="0.75"/>
<line x1="995" y1="273.1" x2="1036" y2="273.3" stroke="#ff8c00" stroke-width="0.7" stroke-opacity="0.75"/>
<line x1="995" y1="345.3" x2="1036" y2="371.6" stroke="#ff8c00" stroke-width="0.7" stroke-opacity="0.75"/>
<line x1="995" y1="343.7" x2="1036" y2="356.9" stroke="#ff8c00" stroke-width="0.7" stroke-opacity="0.75"/>
<line x1="995" y1="307.9" x2="1036" y2="307.2" stroke="#ff8c00" stroke-width="0.7" stroke-opacity="0.75"/>
<line x1="995" y1="343.7" x2="1036" y2="335.1" stroke="#ff8c00" stroke-width="0.7" stroke-opacity="0.75"/>
<line x1="995" y1="304.7" x2="1036" y2="340.2" stroke="#ff8c00" stroke-width="0.7" stroke-opacity="0.75"/>
<line x1="995" y1="338.4" x2="1036" y2="334.2" stroke="#ff8c00" stroke-width="0.7" stroke-opacity="0.75"/>
<line x1="995" y1="267.9" x2="1036" y2="308.6" stroke="#ff8c00" stroke-width="0.7" stroke-opacity="0.75"/>
<line x1="995" y1="332.8" x2="1036" y2="375.5" stroke="#ff8c00" stroke-width="0.7" stroke-opacity="0.75"/>
<line x1="995" y1="369.6" x2="1036" y2="386.6" stroke="#ff8c00" stroke-width="0.7" stroke-opacity="0.75"/>
<line x1="995" y1="373.5" x2="1036" y2="407.5" stroke="#ff8c00" stroke-width="0.7" stroke-opacity="0.75"/>
<line x1="995" y1="283.4" x2="1036" y2="295.6" stroke="#ff8c00" stroke-width="0.7" stroke-opacity="0.75"/>
<line x1="995" y1="241.5" x2="1036" y2="255.5" stroke="#ff8c00" stroke-width="0.7" stroke-opacity="0.75"/>
<line x1="995" y1="382.9" x2="1036" y2="379.2" stroke="#ff8c00" stroke-width="0.7" stroke-opacity="0.75"/>
<line x1="995" y1="321.0" x2="1036" y2="317.6" stroke="#ff8c00" stroke-width="0.7" stroke-opacity="0.75"/>
<line x1="995" y1="242.9" x2="1036" y2="271.9" stroke="#ff8c00" stroke-width="0.7" stroke-opacity="0.75"/>
<line x1="995" y1="268.5" x2="1036" y2="261.4" stroke="#ff8c00" stroke-width="0.7" stroke-opacity="0.75"/>
<line x1="995" y1="254.4" x2="1036" y2="283.1" stroke="#ff8c00" stroke-width="0.7" stroke-opacity="0.75"/>
<line x1="995" y1="323.7" x2="1036" y2="314.4" stroke="#ff8c00" stroke-width="0.7" stroke-opacity="0.75"/>
<line x1="995" y1="266.8" x2="1036" y2="314.8" stroke="#ff8c00" stroke-width="0.7" stroke-opacity="0.75"/>
<line x1="995" y1="265.2" x2="1036" y2="289.0" stroke="#ff8c00" stroke-width="0.7" stroke-opacity="0.75"/>
<line x1="995" y1="297.1" x2="1036" y2="334.0" stroke="#ff8c00" stroke-width="0.7" stroke-opacity="0.75"/>
<line x1="995" y1="326.7" x2="1036" y2="364.0" stroke="#ff8c00" stroke-width="0.7" stroke-opacity="0.75"/>
<line x1="995" y1="315.6" x2="1036" y2="316.9" stroke="#ff8c00" stroke-width="0.7" stroke-opacity="0.75"/>
<line x1="995" y1="258.4" x2="1036" y2="253.2" stroke="#ff8c00" stroke-width="0.7" stroke-opacity="0.75"/>
<line x1="995" y1="362.1" x2="1036" y2="358.8" stroke="#ff8c00" stroke-width="0.7" stroke-opacity="0.75"/>
<line x1="995" y1="233.8" x2="1036" y2="281.8" stroke="#ff8c00" stroke-width="0.7" stroke-opacity="0.75"/>
<line x1="995" y1="261.9" x2="1036" y2="305.5" stroke="#ff8c00" stroke-width="0.7" stroke-opacity="0.75"/>
<line x1="995" y1="243.7" x2="1036" y2="261.6" stroke="#ff8c00" stroke-width="0.7" stroke-opacity="0.75"/>
<line x1="995" y1="265.6" x2="1036" y2="305.4" stroke="#ff8c00" stroke-width="0.7" stroke-opacity="0.75"/>
<line x1="995" y1="328.5" x2="1036" y2="357.0" stroke="#ff8c00" stroke-width="0.7" stroke-opacity="0.75"/>
<line x1="995" y1="351.8" x2="1036" y2="394.1" stroke="#ff8c00" stroke-width="0.7" stroke-opacity="0.75"/>
<line x1="995" y1="285.4" x2="1036" y2="311.6" stroke="#ff8c00" stroke-width="0.7" stroke-opacity="0.75"/>
<line x1="995" y1="301.3" x2="1036" y2="298.0" stroke="#ff8c00" stroke-width="0.7" stroke-opacity="0.75"/>
<line x1="995" y1="363.7" x2="1036" y2="389.3" stroke="#ff8c00" stroke-width="0.7" stroke-opacity="0.75"/>
<line x1="995" y1="360.4" x2="1036" y2="362.7" stroke="#ff8c00" stroke-width="0.7" stroke-opacity="0.75"/>
<line x1="995" y1="316.3" x2="1036" y2="334.1" stroke="#ff8c00" stroke-width="0.7" stroke-opacity="0.75"/>
<line x1="995" y1="346.5" x2="1036" y2="341.1" stroke="#ff8c00" stroke-width="0.7" stroke-opacity="0.75"/>
<line x1="995" y1="285.4" x2="1036" y2="304.5" stroke="#ff8c00" stroke-width="0.7" stroke-opacity="0.75"/>
<line x1="995" y1="241.4" x2="1036" y2="264.6" stroke="#ff8c00" stroke-width="0.7" stroke-opacity="0.75"/>
<line x1="995" y1="347.7" x2="1036" y2="363.0" stroke="#ff8c00" stroke-width="0.7" stroke-opacity="0.75"/>
<line x1="995" y1="333.7" x2="1036" y2="360.1" stroke="#ff8c00" stroke-width="0.7" stroke-opacity="0.75"/>
<line x1="995" y1="264.3" x2="1036" y2="275.3" stroke="#ff8c00" stroke-width="0.7" stroke-opacity="0.75"/>
<line x1="995" y1="389.3" x2="1036" y2="399.4" stroke="#ff8c00" stroke-width="0.7" stroke-opacity="0.75"/>
<line x1="995" y1="298.9" x2="1036" y2="294.0" stroke="#ff8c00" stroke-width="0.7" stroke-opacity="0.75"/>
<line x1="995" y1="264.9" x2="1036" y2="264.8" stroke="#ff8c00" stroke-width="0.7" stroke-opacity="0.75"/>
<line x1="995" y1="378.9" x2="1036" y2="412.5" stroke="#ff8c00" stroke-width="0.7" stroke-opacity="0.75"/>
<line x1="995" y1="370.0" x2="1036" y2="419.1" stroke="#ff8c00" stroke-width="0.7" stroke-opacity="0.75"/>
<line x1="995" y1="327.9" x2="1036" y2="373.8" stroke="#ff8c00" stroke-width="0.7" stroke-opacity="0.75"/>
<line x1="995" y1="315.7" x2="1036" y2="330.8" stroke="#ff8c00" stroke-width="0.7" stroke-opacity="0.75"/>
<line x1="995" y1="381.7" x2="1036" y2="425.9" stroke="#ff8c00" stroke-width="0.7" stroke-opacity="0.75"/>
<line x1="995" y1="381.9" x2="1036" y2="401.0" stroke="#ff8c00" stroke-width="0.7" stroke-opacity="0.75"/>
<line x1="995" y1="353.8" x2="1036" y2="368.2" stroke="#ff8c00" stroke-width="0.7" stroke-opacity="0.75"/>
<line x1="995" y1="389.6" x2="1036" y2="434.8" stroke="#ff8c00" stroke-width="0.7" stroke-opacity="0.75"/>
<line x1="995" y1="276.7" x2="1036" y2="322.8" stroke="#ff8c00" stroke-width="0.7" stroke-opacity="0.75"/>
<line x1="995" y1="259.5" x2="1036" y2="255.3" stroke="#ff8c00" stroke-width="0.7" stroke-opacity="0.75"/>
<line x1="995" y1="345.6" x2="1036" y2="353.2" stroke="#ff8c00" stroke-width="0.7" stroke-opacity="0.75"/>
<line x1="995" y1="313.1" x2="1036" y2="341.5" stroke="#ff8c00" stroke-width="0.7" stroke-opacity="0.75"/>
<line x1="995" y1="236.5" x2="1036" y2="271.2" stroke="#ff8c00" stroke-width="0.7" stroke-opacity="0.75"/>
<line x1="995" y1="274.2" x2="1036" y2="290.1" stroke="#ff8c00" stroke-width="0.7" stroke-opacity="0.75"/>
<line x1="995" y1="285.2" x2="1036" y2="319.7" stroke="#ff8c00" stroke-width="0.7" stroke-opacity="0.75"/>
<line x1="995" y1="349.5" x2="1036" y2="356.7" stroke="#ff8c00" stroke-width="0.7" stroke-opacity="0.75"/>
</g>
<path d="M1000,252 C1012,270 1028,300 1033,330 C1034,350 1020,372 1006,383 C1000,370 997,355 997,330 L998,268 Z" fill="none" stroke="#444" stroke-width="0.7" stroke-dasharray="1,1.2"/>
<path d="M1025,410 C1033,420 1042,440 1045,455 C1038,448 1030,430 1025,410 Z" fill="#f3a858" stroke="#555" stroke-width="0.6" stroke-dasharray="1,1"/>
<path d="M982.5,251.5 C983,250 986,249 990,247.5 L998,244.5 C1001,244 1003,245 1003.5,247.5 C1003,251 1000,254 997,258 C994,262 991,264 986,263.5 C983,263 982,260 982,257 Z" fill="#1c14ec" stroke="#1c14ec" stroke-width="0.6"/>
<path d="M998,244.2 A3.2,3.2 0 0 1 1004.6,247.6" fill="none" stroke="#111" stroke-width="2.4"/>
<path d="M982,253 L978,264 L975,276" fill="none" stroke="#222" stroke-width="0.8" stroke-dasharray="1.2,1" stroke-opacity="0.7"/>
<path d="M1046,282 L1071,301.7 C1085,311 1097,324 1105,338" fill="none" stroke="#111" stroke-width="2.1"/>
<clipPath id="tc"><path d="M1001,244 L1048,283 L1030,276 L1015,272 L1004,262 Z"/></clipPath>
<path d="M1001,244 L1048,283 L1030,276 L1015,272 L1004,262 Z" fill="#fbb060"/>
<g clip-path="url(#tc)">
<line x1="1000" y1="240.7" x2="1050" y2="268.2" stroke="#ff9010" stroke-width="0.7" stroke-opacity="0.8"/>
<line x1="1000" y1="257.6" x2="1050" y2="279.5" stroke="#ff9010" stroke-width="0.7" stroke-opacity="0.8"/>
<line x1="1000" y1="243.4" x2="1050" y2="282.5" stroke="#ff9010" stroke-width="0.7" stroke-opacity="0.8"/>
<line x1="1000" y1="273.5" x2="1050" y2="317.9" stroke="#ff9010" stroke-width="0.7" stroke-opacity="0.8"/>
<line x1="1000" y1="288.9" x2="1050" y2="330.8" stroke="#ff9010" stroke-width="0.7" stroke-opacity="0.8"/>
<line x1="1000" y1="255.5" x2="1050" y2="279.5" stroke="#ff9010" stroke-width="0.7" stroke-opacity="0.8"/>
<line x1="1000" y1="252.2" x2="1050" y2="283.7" stroke="#ff9010" stroke-width="0.7" stroke-opacity="0.8"/>
<line x1="1000" y1="263.9" x2="1050" y2="297.5" stroke="#ff9010" stroke-width="0.7" stroke-opacity="0.8"/>
<line x1="1000" y1="254.8" x2="1050" y2="296.1" stroke="#ff9010" stroke-width="0.7" stroke-opacity="0.8"/>
<line x1="1000" y1="250.7" x2="1050" y2="282.3" stroke="#ff9010" stroke-width="0.7" stroke-opacity="0.8"/>
<line x1="1000" y1="283.8" x2="1050" y2="324.0" stroke="#ff9010" stroke-width="0.7" stroke-opacity="0.8"/>
<line x1="1000" y1="251.4" x2="1050" y2="277.4" stroke="#ff9010" stroke-width="0.7" stroke-opacity="0.8"/>
<line x1="1000" y1="279.4" x2="1050" y2="299.6" stroke="#ff9010" stroke-width="0.7" stroke-opacity="0.8"/>
<line x1="1000" y1="242.2" x2="1050" y2="275.5" stroke="#ff9010" stroke-width="0.7" stroke-opacity="0.8"/>
<line x1="1000" y1="264.5" x2="1050" y2="288.6" stroke="#ff9010" stroke-width="0.7" stroke-opacity="0.8"/>
<line x1="1000" y1="237.8" x2="1050" y2="262.9" stroke="#ff9010" stroke-width="0.7" stroke-opacity="0.8"/>
<line x1="1000" y1="277.3" x2="1050" y2="309.0" stroke="#ff9010" stroke-width="0.7" stroke-opacity="0.8"/>
<line x1="1000" y1="288.9" x2="1050" y2="328.5" stroke="#ff9010" stroke-width="0.7" stroke-opacity="0.8"/>
<line x1="1000" y1="288.9" x2="1050" y2="309.7" stroke="#ff9010" stroke-width="0.7" stroke-opacity="0.8"/>
<line x1="1000" y1="245.2" x2="1050" y2="265.5" stroke="#ff9010" stroke-width="0.7" stroke-opacity="0.8"/>
<line x1="1000" y1="258.8" x2="1050" y2="287.2" stroke="#ff9010" stroke-width="0.7" stroke-opacity="0.8"/>
<line x1="1000" y1="237.8" x2="1050" y2="271.5" stroke="#ff9010" stroke-width="0.7" stroke-opacity="0.8"/>
<line x1="1000" y1="240.2" x2="1050" y2="268.0" stroke="#ff9010" stroke-width="0.7" stroke-opacity="0.8"/>
<line x1="1000" y1="248.6" x2="1050" y2="288.7" stroke="#ff9010" stroke-width="0.7" stroke-opacity="0.8"/>
<line x1="1000" y1="258.0" x2="1050" y2="284.5" stroke="#ff9010" stroke-width="0.7" stroke-opacity="0.8"/>
<line x1="1000" y1="237.4" x2="1050" y2="268.2" stroke="#ff9010" stroke-width="0.7" stroke-opacity="0.8"/>
<line x1="1000" y1="269.5" x2="1050" y2="306.4" stroke="#ff9010" stroke-width="0.7" stroke-opacity="0.8"/>
<line x1="1000" y1="285.2" x2="1050" y2="325.4" stroke="#ff9010" stroke-width="0.7" stroke-opacity="0.8"/>
<line x1="1000" y1="248.6" x2="1050" y2="272.0" stroke="#ff9010" stroke-width="0.7" stroke-opacity="0.8"/>
<line x1="1000" y1="276.7" x2="1050" y2="316.4" stroke="#ff9010" stroke-width="0.7" stroke-opacity="0.8"/>
<line x1="1000" y1="263.0" x2="1050" y2="303.8" stroke="#ff9010" stroke-width="0.7" stroke-opacity="0.8"/>
<line x1="1000" y1="265.4" x2="1050" y2="292.3" stroke="#ff9010" stroke-width="0.7" stroke-opacity="0.8"/>
<line x1="1000" y1="244.3" x2="1050" y2="264.7" stroke="#ff9010" stroke-width="0.7" stroke-opacity="0.8"/>
<line x1="1000" y1="270.4" x2="1050" y2="312.8" stroke="#ff9010" stroke-width="0.7" stroke-opacity="0.8"/>
<line x1="1000" y1="284.8" x2="1050" y2="316.5" stroke="#ff9010" stroke-width="0.7" stroke-opacity="0.8"/>
<line x1="1000" y1="271.6" x2="1050" y2="314.8" stroke="#ff9010" stroke-width="0.7" stroke-opacity="0.8"/>
<line x1="1000" y1="279.8" x2="1050" y2="314.8" stroke="#ff9010" stroke-width="0.7" stroke-opacity="0.8"/>
<line x1="1000" y1="257.8" x2="1050" y2="290.8" stroke="#ff9010" stroke-width="0.7" stroke-opacity="0.8"/>
<line x1="1000" y1="244.4" x2="1050" y2="269.0" stroke="#ff9010" stroke-width="0.7" stroke-opacity="0.8"/>
<line x1="1000" y1="272.6" x2="1050" y2="317.4" stroke="#ff9010" stroke-width="0.7" stroke-opacity="0.8"/>
</g>
<path d="M1017.5,277 C1017,273 1020,270.5 1023,270.7 L1034,274.4 L1050.5,284.5 L1071,302 L1045,306.5 C1040,307 1037,306 1036,304.6 C1034,301 1033,299 1032,297.3 L1026.6,284.5 C1023,282 1019,280 1017.5,277 Z" fill="#1c14ec"/>
<polygon points="505.8,231.7 530.8,223.3 540,230.8 547.5,235 548.3,285 525,293.3 506.7,280.8" fill="#ff8c00"/>
<polyline points="548.3,285 525,293.3 506.7,280.8" fill="none" stroke="#111" stroke-width="1.5" stroke-dasharray="4,1.2"/>
<polyline points="505.8,231.7 530.8,223.3 540,230.8 547.5,235" fill="none" stroke="#111" stroke-width="1.4" stroke-dasharray="5,1.5"/>
<line x1="506.5" y1="231" x2="506.5" y2="281" stroke="#111" stroke-width="2"/>
<line x1="548" y1="236" x2="548" y2="285" stroke="#553300" stroke-width="0.8" stroke-opacity="0.5"/>
<line x1="509" y1="233" x2="509" y2="280" stroke="#e07a00" stroke-width="2" stroke-opacity="0.6"/>
<line x1="1087.4" y1="108" x2="1087.4" y2="155" stroke="#88b0f0" stroke-width="1"/>
<line x1="1087.4" y1="155" x2="1098" y2="150" stroke="#7fe07f" stroke-width="1"/>
<line x1="1087.4" y1="155" x2="1120" y2="181" stroke="#f0a070" stroke-width="1"/>
<polygon points="1097,126 1100,115 1109,109 1131,100 1152,113 1159.6,121.6 1159.6,144 1156,155 1148,159 1125,169 1113,162 1097,150" fill="#dde1e6" stroke="#a8c8ea" stroke-width="0.8"/>
<line x1="1109" y1="109" x2="1124" y2="123" stroke="#9fc4ea" stroke-width="0.8"/>
<line x1="1124" y1="123" x2="1149" y2="114" stroke="#9fc4ea" stroke-width="0.8"/>
<line x1="1124" y1="123" x2="1132" y2="140" stroke="#9fc4ea" stroke-width="0.8"/>
<line x1="1124" y1="123" x2="1112" y2="139" stroke="#9fc4ea" stroke-width="0.8"/>
<line x1="1097" y1="126" x2="1112" y2="139" stroke="#9fc4ea" stroke-width="0.8"/>
<line x1="1112" y1="139" x2="1132" y2="140" stroke="#9fc4ea" stroke-width="0.8"/>
<line x1="1132" y1="140" x2="1156" y2="132" stroke="#9fc4ea" stroke-width="0.8"/>
<line x1="1156" y1="132" x2="1149" y2="114" stroke="#9fc4ea" stroke-width="0.8"/>
<line x1="1112" y1="139" x2="1113" y2="162" stroke="#9fc4ea" stroke-width="0.8"/>
<line x1="1132" y1="140" x2="1132" y2="164" stroke="#9fc4ea" stroke-width="0.8"/>
<line x1="1156" y1="132" x2="1156" y2="155" stroke="#9fc4ea" stroke-width="0.8"/>
<line x1="1113" y1="162" x2="1132" y2="164" stroke="#9fc4ea" stroke-width="0.8"/>
<line x1="1132" y1="164" x2="1148" y2="159" stroke="#9fc4ea" stroke-width="0.8"/>
<svg x="1061.6" y="86" width="28" height="22.4" viewBox="0 0 576 460"><path fill="#d6d6d6" d="M280.37 148.26L96 300.11V464a16 16 0 0 0 16 16l112.06-.29a16 16 0 0 0 15.92-16V368a16 16 0 0 1 16-16h64a16 16 0 0 1 16 16v95.64a16 16 0 0 0 16 16.05L464 480a16 16 0 0 0 16-16V300L295.67 148.26a12.19 12.19 0 0 0-15.3 0zM571.6 251.47L488 182.56V44.05a12 12 0 0 0-12-12h-56a12 12 0 0 0-12 12v72.61L318.47 43a48 48 0 0 0-61 0L4.34 251.47a12 12 0 0 0-1.6 16.9l25.5 31A12 12 0 0 0 45.15 301l235.22-193.74a12.19 12.19 0 0 1 15.3 0L530.9 301a12 12 0 0 0 16.9-1.6l25.5-31a12 12 0 0 0-1.7-16.93z" transform="translate(0,-20)"/></svg>
</svg></div>
<div class="abs" style="left:438px;top:550px;width:214px;height:40px;background:#636363;border-radius:5px;box-shadow:0 2px 4px rgba(0,0,0,.3);z-index:2"></div>
<div class="abs" style="left:668px;top:550px;width:94px;height:40px;background:#636363;border-radius:5px;box-shadow:0 2px 4px rgba(0,0,0,.3);z-index:2"></div>
<svg class="abs" style="left:0;top:0;z-index:2" width="1200" height="600" viewBox="0 0 1200 600">
 <g fill="#f5f5f5" stroke="#f5f5f5" stroke-linejoin="round">
  <rect x="448.3" y="563" width="2.7" height="13.7" stroke="none" rx=".5"/>
  <path d="M451.5 569.9L458.6 563.6V576.2Z M458 569.9L466 563.6V576.2Z" stroke-width="1.2"/>
  <rect x="478.5" y="562" width="2.2" height="15.7" stroke="none" rx=".5"/>
  <path d="M481.5 569.9L489.4 562.8V577Z" stroke-width="1.2"/>
  <path d="M505.8 569.7L520.2 561.5V578Z" stroke-width="1.5"/>
  <rect x="537.5" y="562.2" width="15.6" height="15.3" rx="2" stroke="none"/>
  <path d="M570 561.5L584.5 569.7L570 578Z" stroke-width="1.5"/>
  <path d="M601.6 562.8L609.2 569.9L601.6 577Z" stroke-width="1.2"/>
  <rect x="609.8" y="562" width="2.2" height="15.7" stroke="none" rx=".5"/>
  <path d="M624.8 563.6L632 569.9L624.8 576.2Z M631.5 563.6L638.8 569.9L631.5 576.2Z" stroke-width="1.2"/>
  <rect x="639.8" y="563" width="2.7" height="13.7" stroke="none" rx=".5"/>
 </g>
 <g fill="#f5f5f5"><rect x="681" y="560.8" width="9.4" height="2.4" rx=".6"/><path fill-rule="evenodd" d="M682.3 563H689.2V569L693.6 576.2C694.6 578 693.8 579.3 692 579.3H679.4C677.6 579.3 676.8 578 677.8 576.2L682.3 569ZM684.1 563V569.6L682.2 572.4H689.2L687.3 569.6V563Z"/></g>
 <g stroke="#f5f5f5" stroke-width="2" stroke-linecap="round" fill="none">
  <path d="M705.5 564.3H722.8M705.5 570H722.8M705.5 575.8H722.8"/>
 </g>
 <g fill="#f5f5f5">
  <rect x="713.3" y="561.8" width="2.6" height="5" rx="1"/>
  <rect x="717.9" y="567.5" width="2.6" height="5" rx="1"/>
  <rect x="708.7" y="573.3" width="2.6" height="5" rx="1"/>
 </g>
 <g fill="#f5f5f5">
  <path d="M751.3 561.8V568.2L749.2 566.1L744.3 571L742.7 569.4L747.6 564.5L745.5 561.8Z"/><path d="M735.6 577.8V571.4L737.7 573.5L741.2 570L742.8 571.6L739.3 575.1L741.8 577.8Z"/>
 </g>
</svg>
<div class="abs" style="left:951px;top:571px;font-size:12.3px;color:#a0a0a0;z-index:2;text-shadow:0 1px 2px rgba(0,0,0,.15)">NC Viewer &#169; 2024 Toolpath Labs, Inc.</div>
<svg class="abs" style="left:1166px;top:566px;z-index:2" width="24" height="24" viewBox="0 0 24 24"><rect x="0" y="0" width="24" height="24" rx="2.8" fill="#8fcaa3"/><rect x="2.4" y="2.4" width="19.2" height="19.2" fill="#f2f2f2"/><rect x="4.5" y="4.5" width="15" height="15" fill="#a8d6b8"/><rect x="13.2" y="2" width="1.6" height="3" fill="#8fcaa3"/><rect x="2" y="8.4" width="3" height="3" fill="#8fcaa3"/><rect x="9" y="19" width="1.8" height="3" fill="#8fcaa3"/><rect x="19" y="12" width="3" height="3" fill="#8fcaa3"/><rect x="6.3" y="11.1" width="2.4" height="6" fill="#f2f2f2"/><rect x="11.1" y="6.6" width="2.1" height="10.5" fill="#f2f2f2"/><rect x="15.3" y="6.6" width="2.1" height="6.3" fill="#f2f2f2"/></svg>

<div id="top">
  <div class="abs" style="left:12px;top:11px;width:18px;height:2px;background:#fff"></div>
  <div class="abs" style="left:12px;top:17px;width:18px;height:2px;background:#fff"></div>
  <div class="abs" style="left:12px;top:23px;width:18px;height:2px;background:#fff"></div>
  <div class="abs" style="left:46.5px;top:10px;color:#f4faf5;font-size:14.6px">NC Viewer</div>
  <div class="abs" style="left:125px;top:12px;color:#f4faf5;font-size:13px">v1.2.0</div>
  <svg class="abs" style="left:1086px;top:10.5px" width="18" height="15" viewBox="0 24 512 440"><path fill="#fff" d="M459.37 151.716c.325 4.548.325 9.097.325 13.645 0 138.72-105.583 298.558-298.558 298.558-59.452 0-114.68-17.219-161.137-47.106 8.447.974 16.568 1.299 25.34 1.299 49.055 0 94.213-16.568 130.274-44.832-46.132-.975-84.792-31.188-98.112-72.772 6.498.974 12.995 1.624 19.818 1.624 9.421 0 18.843-1.3 27.614-3.573-48.081-9.747-84.143-51.98-84.143-102.985v-1.299c13.969 7.797 30.214 12.67 47.431 13.319-28.264-18.843-46.781-51.005-46.781-87.391 0-19.492 5.197-37.36 14.294-52.954 51.655 63.675 129.3 105.258 216.365 109.807-1.624-7.797-2.599-15.918-2.599-24.04 0-57.828 46.782-104.934 104.934-104.934 30.213 0 57.502 12.67 76.67 33.137 23.715-4.548 46.456-13.32 66.599-25.34-7.798 24.366-22.742 44.833-42.56 59.452 19.169-2.273 37.686-7.471 54.578-14.942-12.67 18.517-28.589 34.761-46.781 47.957z"/></svg>
  <svg class="abs" style="left:1128px;top:8.7px" width="18" height="18" viewBox="0 0 512 512"><path fill="#fff" d="M512 256C512 114.6 397.4 0 256 0S0 114.6 0 256C0 376 82.7 476.8 194.2 504.5V334.2H141.4V256h52.8V222.3c0-87.1 39.4-127.5 125-127.5c16.2 0 44.2 3.2 55.7 6.4V172c-6-.6-16.5-1-29.6-1c-42 0-58.2 15.9-58.2 57.2V256h83.6l-14.4 78.2H287V510.1C413.8 494.8 512 386.9 512 256h0z"/></svg>
  <svg class="abs" style="left:1170px;top:9.5px" width="17" height="17" viewBox="0 0 17 17"><rect x="0.8" y="0.8" width="15.4" height="15.4" rx="4" fill="none" stroke="#fff" stroke-width="1.3"/><circle cx="8.5" cy="8.5" r="3.5" fill="none" stroke="#fff" stroke-width="1.3"/><circle cx="12.9" cy="4.1" r="0.9" fill="#fff"/></svg>

</div>
<div id="tool">
  <div class="sep" style="left:70px;top:5px"></div>
  <div class="sep" style="left:176px;top:5px"></div>
  <div class="sep" style="left:264px;top:5px"></div>
  <div class="sep" style="left:1164px;top:5px"></div>
  <div class="abs" style="left:206px;top:9.2px;font-size:14.8px;color:#333">Sample</div>
  <div class="abs" style="left:1057px;top:10px;font-size:12.5px;color:#444">Toolpath Labs</div>
  <svg class="abs" style="left:9px;top:11px" width="16" height="14" viewBox="0 30 512 460"><path fill="#333" d="M8.309 189.836L184.313 37.851C199.719 24.546 224 35.347 224 56.015v80.053c160.629 1.839 288 34.032 288 186.258 0 61.441-39.581 122.309-83.333 154.132-13.653 9.931-33.111-2.533-28.077-18.631 45.344-145.012-21.507-183.51-176.59-185.742V360c0 20.7-24.3 31.453-39.687 18.164l-176.004-152c-11.071-9.562-11.086-26.753 0-36.328z"/></svg>
  <svg class="abs" style="left:43px;top:11px" width="16" height="14" viewBox="0 30 512 460"><g transform="translate(512,0) scale(-1,1)"><path fill="#999" d="M8.309 189.836L184.313 37.851C199.719 24.546 224 35.347 224 56.015v80.053c160.629 1.839 288 34.032 288 186.258 0 61.441-39.581 122.309-83.333 154.132-13.653 9.931-33.111-2.533-28.077-18.631 45.344-145.012-21.507-183.51-176.59-185.742V360c0 20.7-24.3 31.453-39.687 18.164l-176.004-152c-11.071-9.562-11.086-26.753 0-36.328z"/></g></svg>
  <svg class="abs" style="left:80px;top:6px" width="18" height="22" viewBox="80 42 18 22"><path fill="#333" d="M82.6 44.2H90.2V51.4H96.6V63.2Q96.6 63.8 96 63.8H82.6Q82 63.8 82 63.2V44.8Q82 44.2 82.6 44.2Z"/><path fill="#333" d="M92 44.3L96.6 49.6H92Z"/><rect x="85" y="55.7" width="8" height="1.9" fill="#fff"/><rect x="88.05" y="52.7" width="1.9" height="8" fill="#fff"/></svg>
  <svg class="abs" style="left:111px;top:10px" width="23" height="16" viewBox="0 64 576 384"><path fill="#333" d="M572.694 292.093L500.27 416.248A63.997 63.997 0 0 1 444.989 448H45.025c-18.523 0-30.064-20.093-20.731-36.093l72.424-124.155A64 64 0 0 1 152 256h399.964c18.523 0 30.064 20.093 20.73 36.093zM152 224h328v-48c0-26.51-21.49-48-48-48H272l-64-64H48C21.49 64 0 85.49 0 112v278.046l69.077-118.418C86.214 242.25 117.989 224 152 224z"/></svg>
  <svg class="abs" style="left:148px;top:9px" width="18" height="18" viewBox="0 32 448 448"><path fill="#333" d="M433.941 129.941l-83.882-83.882A48 48 0 0 0 316.118 32H48C21.49 32 0 53.49 0 80v352c0 26.51 21.49 48 48 48h352c26.51 0 48-21.49 48-48V163.882a48 48 0 0 0-14.059-33.941zM224 416c-35.346 0-64-28.654-64-64 0-35.346 28.654-64 64-64s64 28.654 64 64c0 35.346-28.654 64-64 64zm96-304.52V212c0 6.627-5.373 12-12 12H76c-6.627 0-12-5.373-12-12V108c0-6.627 5.373-12 12-12h228.52c3.183 0 6.235 1.264 8.485 3.515l3.48 3.48A11.996 11.996 0 0 1 320 111.48z"/></svg>
  <svg class="abs" style="left:184px;top:7.8px" width="20" height="20" viewBox="0 0 512 512"><path fill="#333" d="M216 0h80c13.3 0 24 10.7 24 24v168h87.7c17.8 0 26.7 21.5 14.1 34.1L269.7 378.3c-7.5 7.5-19.8 7.5-27.3 0L90.1 226.1c-12.6-12.6-3.7-34.1 14.1-34.1H192V24c0-13.3 10.7-24 24-24zm296 376v112c0 13.3-10.7 24-24 24H24c-13.3 0-24-10.7-24-24V376c0-13.3 10.7-24 24-24h146.7l49 49c20.1 20.1 52.5 20.1 72.6 0l49-49H488c13.3 0 24 10.7 24 24zm-124 88c0-11-9-20-20-20s-20 9-20 20 9 20 20 20 20-9 20-20zm64 0c0-11-9-20-20-20s-20 9-20 20 9 20 20 20 20-9 20-20z"/></svg>
  <svg class="abs" style="left:1140px;top:9px" width="18" height="18" viewBox="0 0 24 24"><rect x="0" y="0" width="24" height="24" rx="2.8" fill="#6db98a"/><rect x="2.4" y="2.4" width="19.2" height="19.2" fill="#ffffff"/><rect x="4.5" y="4.5" width="15" height="15" fill="#8dc9a2"/><rect x="13.2" y="2" width="1.6" height="3" fill="#6db98a"/><rect x="2" y="8.4" width="3" height="3" fill="#6db98a"/><rect x="9" y="19" width="1.8" height="3" fill="#6db98a"/><rect x="19" y="12" width="3" height="3" fill="#6db98a"/><rect x="6.3" y="11.1" width="2.4" height="6" fill="#ffffff"/><rect x="11.1" y="6.6" width="2.1" height="10.5" fill="#ffffff"/><rect x="15.3" y="6.6" width="2.1" height="6.3" fill="#ffffff"/></svg>
  <svg class="abs" style="left:1172px;top:9px" width="22" height="18" viewBox="0 0 22 18"><path fill="#333" d="M11 0C4.9 0 0 4.9 0 11c0 2.4.8 4.7 2.1 6.5.3.3.6.5 1 .5h15.8c.4 0 .8-.2 1-.5C21.2 15.7 22 13.4 22 11 22 4.9 17.1 0 11 0z"/><g fill="#fff"><circle cx="11" cy="4" r="1.2"/><circle cx="5.3" cy="6.6" r="1.2"/><circle cx="16.8" cy="6.6" r="1.2"/><circle cx="3.6" cy="12.7" r="1.2"/><circle cx="18.5" cy="12.7" r="1.2"/><path d="M13.6 5.2h1.4L13.2 12.4c.4.3.7.8.7 1.4v1.4H8.9v-1.4c0-.9.7-1.6 1.6-1.6h.8z"/></g></svg>

</div>
<div id="left">
  <div class="abs" style="left:0;top:0;width:348px;height:2px;background:#68b487"></div>
  <div class="code"><div class="abs" style="left:0;top:345px;width:70px;height:13px;background:#dcdcdc"></div><div class="abs" style="left:74px;top:345px;width:1px;height:13px;background:#555"></div><div style="position:relative;top:-5px"><div class="ln"><span class="g">498655</span><span class="c"><span class="b">G1</span> <span class="k">X</span><span class="b">127.118</span> <span class="k">Y</span><span class="b">127.148</span> <span class="k">E</span><span class="b">0.1497</span></span></div>
<div class="ln"><span class="g">498656</span><span class="c"><span class="b">G1</span> <span class="k">X</span><span class="b">127.215</span> <span class="k">Y</span><span class="b">127.175</span> <span class="k">E</span><span class="b">0.1527</span></span></div>
<div class="ln"><span class="g">498657</span><span class="c"><span class="b">G1</span> <span class="k">X</span><span class="b">127.338</span> <span class="k">Y</span><span class="b">127.233</span> <span class="k">E</span><span class="b">0.1568</span></span></div>
<div class="ln"><span class="g">498658</span><span class="c"><span class="b">G1</span> <span class="k">X</span><span class="b">127.451</span> <span class="k">Y</span><span class="b">127.301</span> <span class="k">E</span><span class="b">0.1607</span></span></div>
<div class="ln"><span class="g">498659</span><span class="c"><span class="b">G1</span> <span class="k">X</span><span class="b">127.559</span> <span class="k">Y</span><span class="b">127.394</span> <span class="k">E</span><span class="b">0.1650</span></span></div>
<div class="ln"><span class="g">498660</span><span class="c"><span class="b">G1</span> <span class="k">X</span><span class="b">127.586</span> <span class="k">Y</span><span class="b">127.423</span> <span class="k">E</span><span class="b">0.1662</span></span></div>
<div class="ln"><span class="g">498661</span><span class="c"><span class="b">G1</span> <span class="k">X</span><span class="b">127.611</span> <span class="k">Y</span><span class="b">127.459</span> <span class="k">E</span><span class="b">0.1675</span></span></div>
<div class="ln"><span class="g">498662</span><span class="c"><span class="b">G1</span> <span class="k">X</span><span class="b">127.655</span> <span class="k">Y</span><span class="b">127.541</span> <span class="k">E</span><span class="b">0.1703</span></span></div>
<div class="ln"><span class="g">498663</span><span class="c"><span class="b">G1</span> <span class="k">X</span><span class="b">127.755</span> <span class="k">Y</span><span class="b">127.812</span> <span class="k">E</span><span class="b">0.1789</span></span></div>
<div class="ln"><span class="g">498664</span><span class="c"><span class="b">G1</span> <span class="k">X</span><span class="b">127.797</span> <span class="k">Y</span><span class="b">127.968</span> <span class="k">E</span><span class="b">0.1837</span></span></div>
<div class="ln"><span class="g">498665</span><span class="c"><span class="b">G1</span> <span class="k">X</span><span class="b">128.146</span> <span class="k">Y</span><span class="b">129.714</span> <span class="k">E</span><span class="b">0.2370</span></span></div>
<div class="ln"><span class="g">498666</span><span class="c"><span class="b">G1</span> <span class="k">X</span><span class="b">128.247</span> <span class="k">Y</span><span class="b">130.289</span> <span class="k">E</span><span class="b">0.2545</span></span></div>
<div class="ln"><span class="g">498667</span><span class="c"><span class="b">G1</span> <span class="k">X</span><span class="b">128.363</span> <span class="k">Y</span><span class="b">131.069</span> <span class="k">E</span><span class="b">0.2781</span></span></div>
<div class="ln"><span class="g">498668</span><span class="c"><span class="b">G1</span> <span class="k">X</span><span class="b">127.820</span> <span class="k">Y</span><span class="b">130.859</span> <span class="k">E</span><span class="b">0.2955</span></span></div>
<div class="ln"><span class="g">498669</span><span class="c"><span class="b">G1</span> <span class="k">X</span><span class="b">127.635</span> <span class="k">Y</span><span class="b">130.771</span> <span class="k">F</span><span class="b">450</span></span></div>
<div class="ln"><span class="g">498670</span><span class="c"><span class="b">G92</span> <span class="k">E</span><span class="b">0.0000</span></span></div>
<div class="ln"><span class="g">498671</span><span class="c"><span class="b">G1</span> <span class="k">E</span><span class="b">-4.0000</span> <span class="k">F</span><span class="b">2400</span></span></div>
<div class="ln"><span class="g">498672</span><span class="c"><span class="b">G0</span> <span class="k">X</span><span class="b">7.989824091696275</span><span class="k">e-39</span> <span class="k">Y</span><span class="b">9.275539254788181</span><span class="k">e-39</span></span></div>
<div class="ln"><span class="g">498673</span><span class="c"><span class="b">G0</span> <span class="k">X</span><span class="b">7.989832499487061</span><span class="k">e-39</span> <span class="k">Y</span><span class="b">9.642842003063159</span><span class="k">e-39</span></span></div>
<div class="ln"><span class="g">498674</span><span class="c"><span class="b">G0</span> <span class="k">X</span><span class="b">5.14285644847226</span><span class="k">e-39</span> <span class="k">Y</span><span class="b">1.0928530541484248</span><span class="k">e-38</span></span></div>
<div class="ln"><span class="g">498675</span><span class="c"><span class="b">G0</span> <span class="k">X</span><span class="b">8.081637167078837</span><span class="k">e-39</span> <span class="k">Y</span><span class="b">8.081677804734309</span><span class="k">e-39</span></span></div>
<div class="ln"><span class="g">498676</span><span class="c"><span class="b">G0</span> <span class="k">X</span><span class="b">1.1020403872700771</span><span class="k">e-38</span> <span class="k">Y</span><span class="b">6.336807581627891</span><span class="k">e-39</span></span></div>
<div class="ln"><span class="g">498677</span><span class="c"><span class="b">G0</span> <span class="k">X</span><span class="b">1.1479535110641404</span><span class="k">e-38</span> <span class="k">Y</span><span class="b">9.918370912312599</span><span class="k">e-39</span></span></div>
<div class="ln"><span class="g">498678</span><span class="c"><span class="b">G0</span> <span class="k">X</span><span class="b">1.0561227793209279</span><span class="k">e-38</span> <span class="k">Y</span><span class="b">6.520395897334412</span><span class="k">e-39</span></span></div>
<div class="ln"><span class="g">498679</span><span class="c"><span class="b">G0</span> <span class="k">X</span><span class="b">9.091784184564346</span><span class="k">e-39</span> <span class="k">Y</span><span class="b">7.806137685097181</span><span class="k">e-39</span></span></div>
<div class="ln"><span class="g">498680</span><span class="c"><span class="b">G0</span> <span class="k">X</span><span class="b">9.551024723785197</span><span class="k">e-39</span> <span class="k">Y</span><span class="b">1.1204041238853686</span><span class="k">e-38</span></span></div>
<div class="ln"><span class="g">498681</span><span class="c"><span class="b">G0</span> <span class="k">X</span><span class="b">6.0612142126491</span><span class="k">e-39</span> <span class="k">Y</span><span class="b">7.071429893759362</span><span class="k">e-39</span></span></div>
<div class="ln"><span class="g">498682</span><span class="c"></span></div>
</div></div>
  <div class="abs" style="left:0;top:2px;width:348px;height:36px;background:#fff;box-shadow:0 1px 3px rgba(0,0,0,.18);border-bottom:1px solid #ddd"></div>
  <div class="hdr" style="left:38px;top:10px;width:auto">GCode File</div>
  <svg class="abs" style="left:11px;top:11.5px" width="18" height="16" viewBox="0 0 576 512"><path fill="#333" d="M402.6 83.2l90.2 90.2c3.8 3.8 3.8 10 0 13.8L274.4 405.6l-92.8 10.3c-12.4 1.4-22.9-9.1-21.5-21.5l10.3-92.8L388.8 83.2c3.8-3.8 10-3.8 13.8 0zm162-22.9l-48.8-48.8c-15.2-15.2-39.9-15.2-55.2 0l-35.4 35.4c-3.8 3.8-3.8 10 0 13.8l90.2 90.2c3.8 3.8 10 3.8 13.8 0l35.4-35.4c15.2-15.3 15.2-40 0-55.2zM384 346.2V448H64V128h229.8c3.2 0 6.2-1.3 8.5-3.5l40-40c7.6-7.6 2.2-20.5-8.5-20.5H48C21.5 64 0 85.5 0 112v352c0 26.5 21.5 48 48 48h352c26.5 0 48-21.5 48-48V306.2c0-10.7-12.9-16-20.5-8.5l-40 40c-2.2 2.3-3.5 5.3-3.5 8.5z"/></svg>
  <svg class="abs" style="left:320.8px;top:14.3px" width="15" height="9" viewBox="0 0 15 9"><path d="M1 8L7.5 1.5L14 8" fill="none" stroke="#333" stroke-width="1.6"/></svg>

  
  <div class="abs" style="left:0;top:387px;width:348px;height:141px;background:#fff"></div>
  <svg class="abs" style="left:12px;top:398.3px" width="16" height="14" viewBox="0 0 16 14"><g fill="#333"><rect x="0" y="0.3" width="2.8" height="2.8" rx=".6"/><rect x="0" y="5.5" width="2.8" height="2.8" rx=".6"/><rect x="0" y="10.3" width="2.8" height="2.8" rx=".6"/></g><g fill="#4a4a4a"><rect x="4.8" y="0.7" width="11" height="1.9"/><rect x="4.8" y="5.9" width="11" height="1.9"/><rect x="4.8" y="10.7" width="11" height="1.9"/></g></svg>
  <svg class="abs" style="left:320.8px;top:401px" width="15" height="9" viewBox="0 0 15 9"><path d="M1 1L7.5 7.5L14 1" fill="none" stroke="#333" stroke-width="1.6"/></svg>
  <svg class="abs" style="left:12px;top:433px" width="16" height="16" viewBox="0 0 512 512"><path fill="#333" d="M487.4 315.7l-42.6-24.6c4.3-23.2 4.3-47 0-70.2l42.6-24.6c4.9-2.8 7.1-8.6 5.5-14-11.1-35.6-30-67.8-54.7-94.6-3.8-4.1-10-5.100-14.8-2.3L380.8 110c-17.9-15.4-38.5-27.3-60.8-35.1V25.8c0-5.6-3.9-10.5-9.4-11.7-36.7-8.2-74.3-7.8-109.2 0-5.5 1.2-9.4 6.1-9.4 11.700V75c-22.2 7.9-42.8 19.8-60.8 35.1L88.7 85.5c-4.9-2.8-11-1.9-14.8 2.3-24.7 26.7-43.6 58.9-54.7 94.6-1.7 5.4.6 11.2 5.5 14L67.3 221c-4.3 23.2-4.3 47 0 70.2l-42.6 24.6c-4.9 2.8-7.1 8.6-5.5 14 11.1 35.6 30 67.8 54.7 94.6 3.8 4.1 10 5.1 14.8 2.3l42.6-24.6c17.9 15.4 38.5 27.3 60.8 35.1v49.2c0 5.6 3.9 10.5 9.4 11.7 36.7 8.2 74.3 7.8 109.2 0 5.5-1.2 9.4-6.1 9.4-11.7v-49.2c22.2-7.9 42.8-19.8 60.8-35.1l42.6 24.6c4.9 2.8 11 1.900 14.8-2.3 24.7-26.7 43.6-58.9 54.7-94.6 1.5-5.5-.7-11.3-5.6-14.1zM256 336c-44.1 0-80-35.9-80-80s35.9-80 80-80 80 35.9 80 80-35.9 80-80 80z"/></svg>
  <svg class="abs" style="left:320.8px;top:435.3px" width="15" height="9" viewBox="0 0 15 9"><path d="M1 8L7.5 1.5L14 8" fill="none" stroke="#333" stroke-width="1.6"/></svg>
  <div class="abs" style="left:303px;top:470px;width:34px;height:14px;border-radius:7px;background:#9bd0a8"></div>
  <div class="abs" style="left:318px;top:467px;width:20px;height:20px;border-radius:10px;background:#66b283;box-shadow:0 1px 3px rgba(0,0,0,.35)"></div>
  <div class="abs" style="left:303px;top:498px;width:34px;height:14px;border-radius:7px;background:#8a8a8a"></div>
  <div class="abs" style="left:302px;top:495px;width:20px;height:20px;border-radius:10px;background:#fafafa;box-shadow:0 1px 3px rgba(0,0,0,.4)"></div>

  <div class="abs" style="left:182px;top:351px;width:54px;height:29px;border-radius:4px;background:rgba(102,178,131,.8);box-shadow:0 1px 3px rgba(0,0,0,.2)"></div>
  <div class="abs" style="left:191px;top:358px;font-size:13px;color:#fff;opacity:.9;letter-spacing:.3px">PLOT</div>
  <div class="abs" style="left:244px;top:351px;width:34px;height:29px;border-radius:4px;background:rgba(232,84,84,.8);box-shadow:0 1px 3px rgba(0,0,0,.2)"></div>
  <svg class="abs" style="left:253.5px;top:358.5px" width="14" height="14" viewBox="0 0 14 14"><circle cx="7" cy="7" r="5.6" fill="none" stroke="#fff" stroke-width="1.8" opacity=".9"/><line x1="3" y1="3" x2="11" y2="11" stroke="#fff" stroke-width="1.8" opacity=".9"/></svg>
  <div class="abs" style="left:286px;top:351px;width:33px;height:29px;border-radius:4px;background:rgba(90,90,90,.85);box-shadow:0 1px 3px rgba(0,0,0,.2)"></div>
  <svg class="abs" style="left:296px;top:359px" width="13" height="13" viewBox="0 0 512 512"><path fill="#fff" d="M487.4 315.7l-42.6-24.6c4.3-23.2 4.3-47 0-70.2l42.6-24.6c4.9-2.8 7.1-8.6 5.5-14-11.1-35.6-30-67.8-54.7-94.6-3.8-4.1-10-5.1-14.8-2.3L380.8 110c-17.9-15.4-38.5-27.3-60.8-35.1V25.8c0-5.6-3.9-10.5-9.4-11.7-36.7-8.2-74.3-7.8-109.2 0-5.5 1.2-9.4 6.1-9.4 11.7V75c-22.2 7.9-42.8 19.8-60.8 35.1L88.7 85.5c-4.9-2.8-11-1.9-14.8 2.3-24.7 26.7-43.6 58.9-54.7 94.6-1.7 5.4.6 11.2 5.5 14L67.3 221c-4.3 23.2-4.3 47 0 70.2l-42.6 24.6c-4.9 2.8-7.1 8.6-5.5 14 11.1 35.6 30 67.8 54.7 94.6 3.8 4.1 10 5.1 14.8 2.3l42.6-24.6c17.9 15.4 38.5 27.3 60.8 35.1v49.2c0 5.6 3.9 10.5 9.4 11.7 36.7 8.2 74.3 7.8 109.2 0 5.5-1.2 9.4-6.1 9.4-11.7v-49.2c22.2-7.9 42.8-19.8 60.8-35.1l42.6 24.6c4.9 2.8 11 1.9 14.8-2.3 24.7-26.7 43.6-58.9 54.7-94.6 1.5-5.5-.7-11.3-5.6-14.1zM256 336c-44.1 0-80-35.9-80-80s35.9-80 80-80 80 35.9 80 80-35.9 80-80 80z"/></svg>
  <div class="abs" style="left:343px;top:363px;width:3.5px;height:6.5px;border-radius:2px;background:#d0d0d0"></div>
<div class="line" style="top:386px"></div>
  <div class="hdr" style="left:38px;top:396px;width:auto">Digital Read Out</div>
  <div class="line" style="top:422px"></div>
  <div class="hdr" style="left:38px;top:432px;width:auto">Machine Options</div>
  <div class="line" style="top:458px"></div>
  <div class="line" style="top:526px"></div>
  <div class="abs" style="left:15px;top:469px;font-size:16.4px;color:#3c3c3c">Plot Orientation: <b style="color:#333">Vertical (Z-Up)</b></div>
  <div class="abs" style="left:15px;top:497px;font-size:16.4px;color:#3c3c3c">Diameter Mode (Lathe)</div>
</div>
</body></html>
